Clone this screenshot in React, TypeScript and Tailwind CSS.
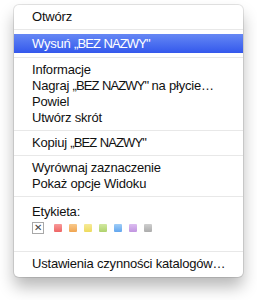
const labelColors = [
  "from-[#f79a9a] to-[#ee6464]",
  "from-[#f8c98a] to-[#f0a550]",
  "from-[#f6ea98] to-[#eedb5c]",
  "from-[#d2e8a0] to-[#afd26c]",
  "from-[#9fcdf7] to-[#62a6ee]",
  "from-[#dcbdf0] to-[#c195e0]",
  "from-[#cfcfcf] to-[#acacac]",
];

function Separator() {
  return (
    <div className="flex h-[9px] items-center">
      <div className="h-px w-full bg-[#e8e8e8]"></div>
    </div>
  );
}

function Item({ children }: { children: React.ReactNode }) {
  return <div className="h-[16px] px-[18px] leading-[16px] whitespace-nowrap">{children}</div>;
}

// caps in the original font run narrower than Arial's
function Name() {
  return (
    <span>
      <span className="tracking-[-0.9px]">„BEZ</span> <span className="tracking-[-0.9px]">NAZWY"</span>
    </span>
  );
}

export default function App() {
  return (
    <div
      className="w-[257px] h-[300px] bg-white pt-[5px] pl-[14px] text-[13px] tracking-[-0.2px] text-[#111]"
      style={{ fontFamily: '"Liberation Sans", Arial, sans-serif' }}
    >
      <div className="flex w-[229px] h-[272px] flex-col rounded-[5px] bg-white pt-[4px] ring-1 ring-black/10 shadow-[0_10px_16px_rgba(0,0,0,0.28)]">
        <Item>Otwórz</Item>
        <Separator />
        <div className="h-[19px] bg-gradient-to-b from-[#6687f4] to-[#3457ec] px-[18px] leading-[19px] text-white whitespace-nowrap">
          Wysuń <Name />
        </div>
        <Separator />
        <Item>Informacje</Item>
        <Item>
          Nagraj <Name /> na płycie…
        </Item>
        <Item>Powiel</Item>
        <Item>Utwórz skrót</Item>
        <Separator />
        <Item>
          Kopiuj <Name />
        </Item>
        <Separator />
        <Item>Wyrównaj zaznaczenie</Item>
        <Item>Pokaż opcje Widoku</Item>
        <Separator />
        <div className="flex h-[46px] flex-col pt-[3px]">
          <Item>Etykieta:</Item>
          <div className="mt-[2px] flex items-center px-[18px]">
            <div className="flex h-[12px] w-[12px] items-center justify-center border border-[#a8a8a8] bg-white text-[10px] leading-none text-[#444]">
              ✕
            </div>
            <div className="ml-[10px] flex gap-[7px]">
              {labelColors.map((c) => (
                <div key={c} className={`h-[8px] w-[8px] rounded-[1px] bg-gradient-to-b ${c}`}></div>
              ))}
            </div>
          </div>
        </div>
        <Separator />
        <Item>Ustawienia czynności katalogów…</Item>
      </div>
    </div>
  );
}
